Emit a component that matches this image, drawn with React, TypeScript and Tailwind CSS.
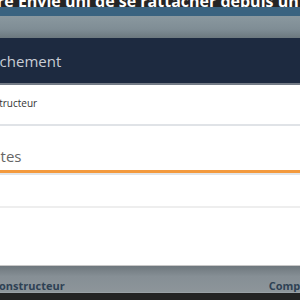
export default function App() {
  return (
    <div className="w-[300px] h-[300px] overflow-hidden bg-[#222] flex flex-col font-['Open_Sans',sans-serif]">
      {/* page header behind the modal */}
      <div className="h-[7px] shrink-0 bg-[#252525] overflow-hidden relative">
        <div className="absolute left-[-3px] bottom-[-2px] whitespace-nowrap text-white font-bold text-[16px] leading-[16px]">
          re Envie uni de se rattacher depuis un
        </div>
      </div>
      <div className="h-[9px] shrink-0 bg-[#3a6380]" />
      <div className="h-[22px] shrink-0 bg-[linear-gradient(180deg,#8a989f_0%,#7f8d95_60%,#6c787e_100%)]" />

      {/* modal */}
      <div className="flex flex-col w-[300px] shrink-0">
        <div className="h-[47px] bg-[#1d2a40] border-b-2 border-[#737b86] flex items-center overflow-hidden">
          <span className="whitespace-nowrap text-[#c9ced6] text-[15px] -ml-[37px] mt-[2px]">Rattachement</span>
        </div>
        <div className="bg-white h-[181px] flex flex-col">
          <div className="h-[41px] border-b-2 border-[#e0e3e7] flex items-start pt-[11px] overflow-hidden">
            <span className="whitespace-nowrap text-[#333] text-[10px] -ml-[24px]">Constructeur</span>
          </div>
          <div className="h-[47px] border-b-[3px] border-[#f39a3e] flex items-end pb-[3px] overflow-hidden">
            <span className="whitespace-nowrap text-[#666] text-[15px] -ml-[41px]">Comptes</span>
          </div>
          <div className="h-[35px] border-t-2 border-[#e2e5e8] border-b-2 border-b-[#eeeeee]" />
          <div className="flex-1 border-b border-[#c8c8c8]" />
        </div>
      </div>

      {/* page footer behind the modal */}
      <div className="h-[27px] shrink-0 bg-[linear-gradient(180deg,#6e777d_0%,#868f95_40%,#8d959a_100%)] flex items-end justify-between overflow-hidden border-b border-[#9aa1a6]">
        <span className="whitespace-nowrap text-[#2e4154] font-bold text-[11px] leading-[13px] -ml-[8px]">Constructeur</span>
        <span className="whitespace-nowrap text-[#2e4154] font-bold text-[11px] leading-[13px] -mr-[17px]">Comptes</span>
      </div>
      <div className="flex-1 bg-[#232323]" />
    </div>
  );
}
